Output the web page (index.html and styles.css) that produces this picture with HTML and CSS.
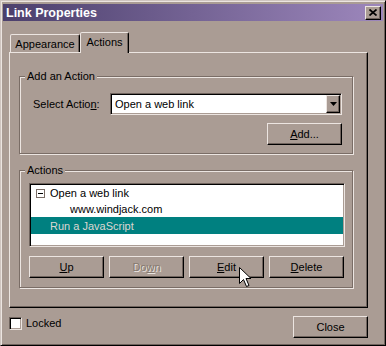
FILE: index.html
```html
<!DOCTYPE html>
<html lang="en">
<head>
  <meta charset="UTF-8" />
  <title>Link Properties</title>
  <link rel="stylesheet" href="styles.css">
</head>
<body>
  <div class="window">
    <div class="titlebar">
      <span class="title">Link Properties</span>
      <div class="title-close">
        <svg width="8" height="7" viewBox="0 0 8 7">
          <path d="M0.5 0.5 L7.5 6.5 M7.5 0.5 L0.5 6.5" stroke="#000" stroke-width="1.7" fill="none"/>
        </svg>
      </div>
    </div>

    <div class="dialog-body">
      <div class="tabs">
        <div class="tab tab-back">Appearance</div>
        <div class="tab tab-active">Actions</div>
      </div>

      <div class="panel">
        <div class="group">
          <div class="group-title">Add an Action</div>
          <div class="action-row">
            <span class="field-label">Select Actio<u>n</u>:</span>
            <div class="select">
              <span class="select-text">Open a web link</span>
              <div class="drop-btn">
                <svg width="7" height="4" viewBox="0 0 7 4"><polygon points="0,0 7,0 3.5,4" fill="#000"/></svg>
              </div>
            </div>
          </div>
          <div class="add-row">
            <button class="btn"><span><u>A</u>dd...</span></button>
          </div>
        </div>

        <div class="group group-actions">
          <div class="group-title">Actions</div>
          <div class="list">
            <div class="list-row row-parent">
              <span class="tree-box"></span>
              <span>Open a web link</span>
            </div>
            <div class="list-row row-child">www.windjack.com</div>
            <div class="list-row row-selected">Run a JavaScript</div>
          </div>
          <div class="buttons-row">
            <button class="btn"><span><u>U</u>p</span></button>
            <button class="btn btn-disabled"><span>Do<u>w</u>n</span></button>
            <button class="btn"><span><u>E</u>dit</span></button>
            <button class="btn"><span><u>D</u>elete</span></button>
          </div>
        </div>
      </div>

      <div class="footer">
        <label class="check-row">
          <span class="checkbox"></span>
          <span>Locked</span>
        </label>
        <button class="btn">Close</button>
      </div>
    </div>

    <svg class="cursor" width="13" height="21" viewBox="0 0 13 21">
      <path d="M0.5 0.5 L0.5 16.5 L4.5 12.5 L7.5 19.5 L10 18.5 L7 11.5 L12 11.5 Z" fill="#fff" stroke="#000" stroke-width="1"/>
    </svg>
  </div>
</body>
</html>
```

FILE: styles.css
```css
* {
  box-sizing: border-box;
  margin: 0;
  padding: 0;
}
body {
  font-family: "Liberation Sans", Arial, sans-serif;
  font-size: 11px;
  color: #000;
  background: #aa9c94;
}
.window {
  position: relative;
  width: 386px;
  height: 346px;
  background: #aa9c94;
  border: 1px solid;
  border-color: #cfc5c0 #000 #000 #cfc5c0;
  box-shadow: inset 1px 1px 0 #ece5e1, inset -1px -1px 0 #6f635d;
  padding: 3px 2px 2px 2px;
}
.titlebar {
  height: 17px;
  display: flex;
  align-items: center;
  justify-content: space-between;
  padding: 0 2px 0 3px;
  background: linear-gradient(to right, #4b3f6c, #9d87bc);
  color: #fff;
  font-weight: bold;
  font-size: 12.5px;
}
.title-close {
  width: 16px;
  height: 14px;
  background: #aa9c94;
  border: 1px solid;
  border-color: #ece5e1 #000 #000 #ece5e1;
  box-shadow: inset -1px -1px 0 #6f635d;
  display: flex;
  align-items: center;
  justify-content: center;
}
.dialog-body {
  padding: 11px 15px 0 6px;
}

/* tabs */
.tabs {
  position: relative;
  z-index: 1;
  display: flex;
  align-items: flex-end;
  height: 21px;
  margin-bottom: -1px;
  padding-left: 1px;
}
.tab {
  background: #aa9c94;
  border: 1px solid;
  border-bottom: 0;
  border-color: #ece5e1 #000 transparent #ece5e1;
  border-radius: 2px 2px 0 0;
  box-shadow: inset -1px 0 0 #6f635d;
  display: flex;
  align-items: center;
  justify-content: center;
}
.tab-back {
  width: 70px;
  height: 18px;
  margin-bottom: 1px;
}
.tab-active {
  width: 49px;
  height: 21px;
  padding-bottom: 2px;
}
.panel {
  border: 1px solid;
  border-color: #ece5e1 #000 #000 #ece5e1;
  box-shadow: inset -1px -1px 0 #6f635d;
  padding: 23px 14px 19px 9px;
}

/* group boxes */
.group {
  border: 1px solid #7a6d66;
  box-shadow: inset 1px 1px 0 #ece5e1, 1px 1px 0 #ece5e1;
}
.group + .group {
  margin-top: 16px;
}
.group-title {
  width: max-content;
  margin: -7px 0 0 5px;
  padding: 0 2px;
  line-height: 13px;
  background: #aa9c94;
}
.action-row {
  display: flex;
  align-items: center;
  margin-top: 10px;
  padding: 0 10px 0 13px;
}
.field-label {
  width: 77px;
}
.select {
  flex: 1;
  height: 22px;
  display: flex;
  align-items: center;
  padding: 1px;
  background: #fff;
  border: 1px solid;
  border-color: #6f635d #ece5e1 #ece5e1 #6f635d;
  box-shadow: inset 1px 1px 0 #000, inset -1px -1px 0 #aa9c94;
}
.select-text {
  padding-left: 3px;
}
.drop-btn {
  width: 14px;
  height: 18px;
  margin-left: auto;
  background: #aa9c94;
  border: 1px solid;
  border-color: #ece5e1 #000 #000 #ece5e1;
  box-shadow: inset -1px -1px 0 #6f635d;
  display: flex;
  align-items: center;
  justify-content: center;
}
.add-row {
  display: flex;
  justify-content: flex-end;
  padding: 8px 10px 8px 0;
}

/* buttons */
.btn {
  width: 75px;
  height: 22px;
  background: #aa9c94;
  border: 1px solid;
  border-color: #ece5e1 #000 #000 #ece5e1;
  box-shadow: inset -1px -1px 0 #6f635d;
  display: flex;
  align-items: center;
  justify-content: center;
  font: inherit;
  color: #000;
}
.btn-disabled {
  color: #85796f;
  text-shadow: 1px 1px 0 #ece5e1;
}
.buttons-row {
  display: flex;
  gap: 5px;
  padding: 9px 7px 9px 9px;
}

/* action list */
.list {
  height: 64px;
  margin: 6px 7px 0 9px;
  padding: 1px;
  background: #fff;
  border: 1px solid;
  border-color: #6f635d #ece5e1 #ece5e1 #6f635d;
  box-shadow: inset 1px 1px 0 #000, inset -1px -1px 0 #aa9c94;
}
.list-row {
  display: flex;
  align-items: center;
  height: 16px;
}
.row-parent {
  padding-left: 5px;
  gap: 5px;
}
.tree-box {
  position: relative;
  width: 9px;
  height: 9px;
  border: 1px solid #7a6d66;
  background: #fff;
}
.tree-box::after {
  content: "";
  position: absolute;
  left: 1px;
  top: 3px;
  width: 5px;
  height: 1px;
  background: #000;
}
.row-child {
  padding-left: 39px;
}
.row-selected {
  height: 17px;
  padding-left: 19px;
  background: #008080;
  color: #dcd6d2;
}

/* footer */
.footer {
  display: flex;
  justify-content: space-between;
  align-items: flex-start;
  margin-top: 8px;
}
.check-row {
  display: flex;
  align-items: center;
  gap: 4px;
  margin-top: 1px;
  line-height: 13px;
}
.checkbox {
  width: 13px;
  height: 13px;
  background: #fff;
  border: 1px solid;
  border-color: #6f635d #ece5e1 #ece5e1 #6f635d;
  box-shadow: inset 1px 1px 0 #000, inset -1px -1px 0 #aa9c94;
}
.cursor {
  position: absolute;
  left: 238px;
  top: 266px;
}
```
